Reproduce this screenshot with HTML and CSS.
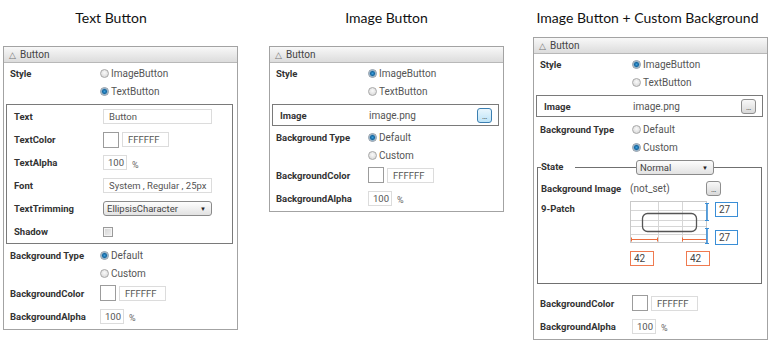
FILE: index.html
```html
<!DOCTYPE html>
<html lang="en">
<head>
  <meta charset="UTF-8">
  <title>Button properties</title>
  <link rel="stylesheet" href="styles.css">
</head>
<body>

<div class="page">

  <!-- Text Button -->
  <div class="column column-first">
    <div class="title">Text Button</div>
    <div class="panel">
      <div class="panel-head"><span class="arrow">△</span>Button</div>
      <div class="panel-body">
        <div class="row"><div class="label">Style</div><span class="radio"></span><span class="value">ImageButton</span></div>
        <div class="row"><div class="label"></div><span class="radio checked"></span><span class="value">TextButton</span></div>

        <div class="group">
          <div class="row field"><div class="label">Text</div><div class="input wide">Button</div></div>
          <div class="row field"><div class="label">TextColor</div><span class="swatch"></span><div class="input hex">FFFFFF</div></div>
          <div class="row field"><div class="label">TextAlpha</div><div class="input alpha">100</div><span class="percent">%</span></div>
          <div class="row field"><div class="label">Font</div><div class="input wide">System , Regular , 25px</div></div>
          <div class="row field"><div class="label">TextTrimming</div><div class="select wide"><span>EllipsisCharacter</span><span class="caret">▼</span></div></div>
          <div class="row field"><div class="label">Shadow</div><span class="checkbox"></span></div>
        </div>

        <div class="row"><div class="label">Background Type</div><span class="radio checked"></span><span class="value">Default</span></div>
        <div class="row"><div class="label"></div><span class="radio"></span><span class="value">Custom</span></div>
        <div class="row color-row"><div class="label">BackgroundColor</div><span class="swatch"></span><div class="input hex">FFFFFF</div></div>
        <div class="row alpha-row"><div class="label">BackgroundAlpha</div><div class="input alpha">100</div><span class="percent">%</span></div>
      </div>
    </div>
  </div>

  <!-- Image Button -->
  <div class="column">
    <div class="title">Image Button</div>
    <div class="panel">
      <div class="panel-head"><span class="arrow">△</span>Button</div>
      <div class="panel-body">
        <div class="row"><div class="label">Style</div><span class="radio checked"></span><span class="value">ImageButton</span></div>
        <div class="row"><div class="label"></div><span class="radio"></span><span class="value">TextButton</span></div>

        <div class="group">
          <div class="row file-row"><div class="label">Image</div><span class="value">image.png</span><span class="dots hot">...</span></div>
        </div>

        <div class="row"><div class="label">Background Type</div><span class="radio checked"></span><span class="value">Default</span></div>
        <div class="row"><div class="label"></div><span class="radio"></span><span class="value">Custom</span></div>
        <div class="row color-row"><div class="label">BackgroundColor</div><span class="swatch"></span><div class="input hex">FFFFFF</div></div>
        <div class="row alpha-row"><div class="label">BackgroundAlpha</div><div class="input alpha">100</div><span class="percent">%</span></div>
      </div>
    </div>
  </div>

  <!-- Image Button + Custom Background -->
  <div class="column column-last">
    <div class="title">Image Button + Custom Background</div>
    <div class="panel">
      <div class="panel-head"><span class="arrow">△</span>Button</div>
      <div class="panel-body">
        <div class="row"><div class="label">Style</div><span class="radio checked"></span><span class="value">ImageButton</span></div>
        <div class="row"><div class="label"></div><span class="radio"></span><span class="value">TextButton</span></div>

        <div class="group">
          <div class="row file-row"><div class="label">Image</div><span class="value">image.png</span><span class="dots">...</span></div>
        </div>

        <div class="row spaced"><div class="label">Background Type</div><span class="radio"></span><span class="value">Default</span></div>
        <div class="row"><div class="label"></div><span class="radio checked"></span><span class="value">Custom</span></div>

        <div class="state">
          <span class="state-legend">State</span>
          <div class="select state-select"><span>Normal</span><span class="caret">▼</span></div>

          <div class="row state-row"><div class="label">Background Image</div><span class="value file-name">(not_set)</span><span class="dots">...</span></div>
          <div class="row patch-row">
            <div class="label">9-Patch</div>
            <div class="patch">
              <svg width="80" height="44" viewBox="0 0 80 44">
                <rect x="0.5" y="0.5" width="76" height="41" fill="#fff" stroke="#c9c9c9"/>
                <path d="M28.5 1V41M52.5 1V41M1 9.5H76M1 19.5H76M1 25.5H76M1 33.5H76" stroke="#d6d6d6"/>
                <rect x="12.5" y="12.5" width="54" height="18" rx="5" fill="none" stroke="#555" stroke-width="1.3"/>
                <path d="M1 38.5H27M53 38.5H76" stroke="#ec6c3c" stroke-width="1.2"/>
                <path d="M1.5 36.5V40.5M27.5 36.5V40.5M52.5 36.5V40.5" stroke="#ec6c3c"/>
                <path d="M77 2V20M77 27V43" stroke="#3a8ed6" stroke-width="1.6"/>
                <path d="M75 2.5H79M75 19.5H79M75 27.5H79M75 42.5H79" stroke="#3a8ed6"/>
              </svg>
              <div class="patch-side">
                <div class="num blue">27</div>
                <div class="num blue">27</div>
              </div>
              <div class="patch-bottom">
                <div class="num orange">42</div>
                <div class="num orange">42</div>
              </div>
            </div>
          </div>
        </div>

        <div class="row color-row after-state"><div class="label">BackgroundColor</div><span class="swatch"></span><div class="input hex">FFFFFF</div></div>
        <div class="row alpha-row"><div class="label">BackgroundAlpha</div><div class="input alpha">100</div><span class="percent">%</span></div>
      </div>
    </div>
  </div>

</div>

</body>
</html>
```

FILE: styles.css
```css
body {
  margin: 0;
  background: #fff;
  font-family: Roboto, "Noto Sans", sans-serif;
  color: #333;
}

.page {
  display: flex;
  align-items: flex-start;
  padding-left: 3px;
}

.column {
  width: 235px;
  flex: none;
}

.column + .column {
  margin-left: 31px;
}

.column.column-last {
  margin-left: 29px;
}

.title {
  box-sizing: border-box;
  height: 46px;
  padding-top: 9px;
  font-family: Lato, "Open Sans", sans-serif;
  font-size: 14px;
  line-height: 18px;
  color: #111;
  text-align: center;
  white-space: nowrap;
}

.column-first .title {
  padding-right: 19px;
}

.column-last .title {
  height: 37px;
  padding-right: 6px;
}

/* Panel frame */
.panel {
  border: 1px solid #a3a3a3;
  background: #fff;
}

.panel-head {
  height: 15px;
  padding-left: 5px;
  border-bottom: 1px solid #b8b8b8;
  background: linear-gradient(#f8f8f8, #dcdcdc);
  font-size: 10px;
  line-height: 15px;
  color: #444;
}

.arrow {
  font-size: 9px;
  color: #777;
  margin-right: 4px;
}

.panel-body {
  padding: 1px 4px 1px 2px;
}

.row {
  display: flex;
  align-items: center;
  height: 18px;
  padding-left: 4px;
}

.row.field {
  height: 23px;
}

.row.color-row {
  height: 22px;
}

.row.alpha-row {
  height: 24px;
}

.row.spaced {
  margin-top: 3px;
}

.label {
  width: 92px;
  flex: none;
  font-size: 9.5px;
  font-weight: bold;
  color: #333;
}

.column-first .label {
  width: 90px;
}

.value {
  font-size: 10px;
  color: #555;
}

.group {
  margin: 4px 0 2px;
  border: 1px solid #7a7a7a;
}

.group .row {
  padding-left: 7px;
}

.column .group .label {
  width: 89px;
}

/* Controls */
.radio {
  box-sizing: border-box;
  width: 9px;
  height: 9px;
  margin-right: 2px;
  border: 1px solid #a8a8a8;
  border-radius: 50%;
  background: radial-gradient(circle at 50% 40%, #fafafa, #d2d2d2);
}

.radio.checked {
  border-color: #8a98a6;
  background: radial-gradient(circle, #3aa0e0 0, #17679f 2px, #8eb2cc 3px, #e4e4e4 3.6px);
}

.input {
  box-sizing: border-box;
  height: 15px;
  padding-left: 5px;
  border: 1px solid #dcdcdc;
  font-size: 9.5px;
  line-height: 13px;
  color: #555;
}

.input.wide,
.select.wide {
  width: 109px;
}

.input.hex {
  width: 47px;
}

.input.alpha {
  width: 24px;
  padding-left: 4px;
}

.percent {
  margin-left: 5px;
  padding-top: 4px;
  font-size: 9px;
  color: #666;
}

.swatch {
  box-sizing: border-box;
  width: 16px;
  height: 16px;
  margin-right: 3px;
  border: 1px solid #9c9c9c;
  background: #fff;
}

.select {
  box-sizing: border-box;
  display: flex;
  align-items: center;
  justify-content: space-between;
  height: 15px;
  padding: 0 5px 0 3px;
  border: 1px solid #8a8a8a;
  border-radius: 3px;
  background: linear-gradient(#fdfdfd, #e2e2e2);
  font-size: 9.5px;
  color: #444;
}

.caret {
  font-size: 6px;
  color: #222;
}

.checkbox {
  box-sizing: border-box;
  width: 10px;
  height: 10px;
  border: 1px solid #9a9a9a;
  background: linear-gradient(135deg, #d4d4d4, #f0f0f0);
  box-shadow: inset 0 0 0 1px #f4f4f4;
}

.dots {
  box-sizing: border-box;
  width: 15px;
  height: 15px;
  border: 1px solid #8e8e8e;
  border-radius: 3px;
  background: linear-gradient(#f8f8f8, #d9d9d9);
  font-size: 8px;
  line-height: 16px;
  text-align: center;
  color: #333;
  letter-spacing: -0.5px;
}

.dots.hot {
  border-color: #3c7fb1;
  background: linear-gradient(#eaf6fd, #bde4f8);
}

.file-row {
  height: 20px;
  padding-right: 6px;
}

.file-row .dots {
  margin-left: auto;
}

/* State box with 9-patch editor */
.state {
  position: relative;
  margin: 11px 1px 0;
  padding: 10px 0 17px;
  border: 1px solid #707070;
}

.state-legend {
  position: absolute;
  top: -8px;
  left: 3px;
  padding-right: 11px;
  background: #fff;
  font-size: 9.5px;
  font-weight: bold;
  line-height: 14px;
}

.state-select {
  position: absolute;
  top: -8px;
  left: 98px;
  width: 78px;
}

.state .row {
  padding-left: 3px;
}

.state .label {
  width: 89px;
}

.state-row {
  height: 20px;
}

.file-name {
  width: 76px;
}

.patch-row {
  align-items: flex-start;
  height: auto;
  margin-top: 3px;
}

.patch-row .label {
  line-height: 16px;
}

.patch {
  display: grid;
  grid-template-columns: 80px 23px;
  column-gap: 5px;
  row-gap: 6px;
}

.patch svg {
  display: block;
}

.patch-side {
  display: flex;
  flex-direction: column;
  justify-content: space-between;
  padding-top: 1px;
}

.patch-bottom {
  grid-column: 1 / 3;
  display: flex;
  justify-content: space-between;
  width: 80px;
}

.num {
  box-sizing: border-box;
  width: 23px;
  height: 15px;
  padding-left: 3px;
  border: 1px solid #3a8ed6;
  font-size: 10px;
  line-height: 13px;
  color: #444;
}

.num.orange {
  width: 24px;
  border-color: #ef7a50;
}

.after-state {
  margin-top: 8px;
}
```
